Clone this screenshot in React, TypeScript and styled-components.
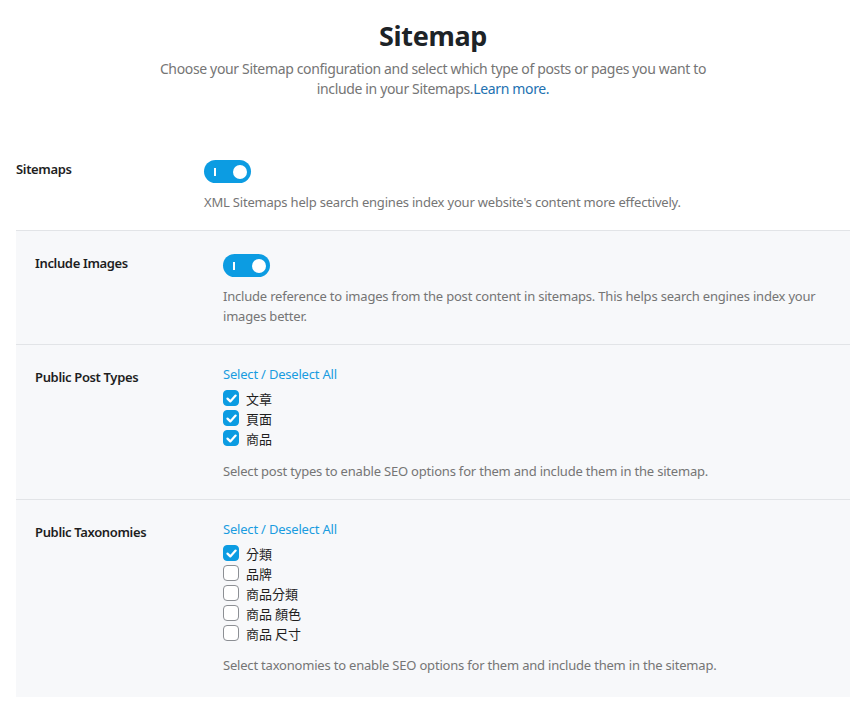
import React, { useState } from 'react';
import styled, { createGlobalStyle } from 'styled-components';

const GlobalStyle = createGlobalStyle`
  body {
    margin: 0;
    background: #fff;
    font-family: 'Noto Sans', 'Noto Sans CJK TC', sans-serif;
    letter-spacing: -0.2px;
    color: #1e1e1e;
  }
`;

const Page = styled.div`
  padding: 0 13px 0 16px;
`;

const Header = styled.header`
  text-align: center;
  padding-top: 17px;
  margin-bottom: 38px;

  > h1 {
    margin: 0;
    font-size: 27px;
    line-height: 38px;
    font-weight: 700;
    letter-spacing: -0.3px;
    color: #1d2327;
  }

  > p {
    margin: 4px auto 0;
    max-width: 570px;
    font-size: 14px;
    line-height: 20px;
    letter-spacing: -0.35px;
    color: #757575;

    a {
      color: #2271b1;
      text-decoration: none;
    }
  }
`;

const Panel = styled.div`
  background: #f7f8fa;
  border-top: 1px solid #e2e4e7;
  padding-bottom: 4px;
`;

const Row = styled.div<{ $inset?: boolean }>`
  display: grid;
  grid-template-columns: 188px 1fr;
  padding: 19px ${(p) => (p.$inset ? '19px' : '0')} 18px;

  & + & {
    border-top: 1px solid #e2e4e7;
  }
`;

const Label = styled.div`
  margin-top: 3px;
  font-size: 13px;
  line-height: 20px;
  font-weight: 600;
  letter-spacing: -0.35px;
  color: #1e1e1e;
`;

const Content = styled.div`
  display: flex;
  flex-direction: column;
  align-items: flex-start;
`;

const Description = styled.p<{ $gap?: number }>`
  margin: ${(p) => p.$gap ?? 9}px 0 0;
  font-size: 13px;
  line-height: 20px;
  color: #757575;
`;

const Track = styled.button<{ $on: boolean }>`
  position: relative;
  margin-top: 4px;
  width: 47px;
  height: 23px;
  border: none;
  padding: 0;
  border-radius: 12px;
  background: ${(p) => (p.$on ? '#0c9ce2' : '#c3c4c7')};
  cursor: pointer;

  &::before {
    content: '';
    position: absolute;
    left: 10px;
    top: 8px;
    width: 2px;
    height: 8px;
    background: #fff;
    opacity: ${(p) => (p.$on ? 1 : 0)};
  }
`;

const Knob = styled.span<{ $on: boolean }>`
  position: absolute;
  top: 4.5px;
  left: ${(p) => (p.$on ? '29px' : '4px')};
  width: 14px;
  height: 14px;
  border-radius: 50%;
  background: #fff;
`;

const SelectAll = styled.a`
  font-size: 13px;
  line-height: 20px;
  color: #1a9ce0;
  text-decoration: none;
  cursor: pointer;
  margin-bottom: 4px;
`;

const CheckRow = styled.label`
  display: flex;
  align-items: center;
  gap: 7px;
  height: 20px;
  font-size: 13px;
  font-family: 'Noto Sans CJK TC', sans-serif;
  letter-spacing: 0;
  color: #1e1e1e;
  cursor: pointer;
`;

const Box = styled.span<{ $checked: boolean }>`
  box-sizing: border-box;
  width: 16px;
  height: 16px;
  border-radius: 4px;
  border: 1px solid ${(p) => (p.$checked ? '#0c9ce2' : '#8c8f94')};
  background: ${(p) => (p.$checked ? '#0c9ce2' : '#fff')};
  display: flex;
  align-items: center;
  justify-content: center;
`;

const Toggle = ({ initial }: { initial: boolean }) => {
  const [on, setOn] = useState(initial);
  return (
    <Track $on={on} onClick={() => setOn(!on)}>
      <Knob $on={on} />
    </Track>
  );
};

interface CheckListProps {
  items: { name: string; checked: boolean }[];
}

const CheckList = ({ items }: CheckListProps) => {
  const [state, setState] = useState(items.map((i) => i.checked));
  const allOn = state.every(Boolean);
  return (
    <>
      <SelectAll onClick={() => setState(state.map(() => !allOn))}>Select / Deselect All</SelectAll>
      {items.map((item, i) => (
        <CheckRow key={item.name} onClick={() => setState(state.map((v, j) => (j === i ? !v : v)))}>
          <Box $checked={state[i]}>
            {state[i] && (
              <svg width="11" height="9" viewBox="0 0 11 9">
                <path d="M1.5 4.6l2.8 2.8L9.6 1.6" fill="none" stroke="#fff" strokeWidth="2.2" strokeLinecap="round" strokeLinejoin="round" />
              </svg>
            )}
          </Box>
          {item.name}
        </CheckRow>
      ))}
    </>
  );
};

const postTypes = [
  { name: '文章', checked: true },
  { name: '頁面', checked: true },
  { name: '商品', checked: true },
];

const taxonomies = [
  { name: '分類', checked: true },
  { name: '品牌', checked: false },
  { name: '商品分類', checked: false },
  { name: '商品 顏色', checked: false },
  { name: '商品 尺寸', checked: false },
];

const App = () => (
  <Page>
    <GlobalStyle />
    <Header>
      <h1>Sitemap</h1>
      <p>
        Choose your Sitemap configuration and select which type of posts or pages you want to include in your
        Sitemaps.<a href="#">Learn more.</a>
      </p>
    </Header>

    <Row>
      <Label>Sitemaps</Label>
      <Content>
        <Toggle initial />
        <Description>XML Sitemaps help search engines index your website's content more effectively.</Description>
      </Content>
    </Row>

    <Panel>
      <Row $inset>
        <Label>Include Images</Label>
        <Content>
          <Toggle initial />
          <Description>
            Include reference to images from the post content in sitemaps. This helps search engines index your images
            better.
          </Description>
        </Content>
      </Row>
      <Row $inset>
        <Label>Public Post Types</Label>
        <Content>
          <CheckList items={postTypes} />
          <Description $gap={13}>Select post types to enable SEO options for them and include them in the sitemap.</Description>
        </Content>
      </Row>
      <Row $inset>
        <Label>Public Taxonomies</Label>
        <Content>
          <CheckList items={taxonomies} />
          <Description $gap={12}>Select taxonomies to enable SEO options for them and include them in the sitemap.</Description>
        </Content>
      </Row>
    </Panel>
  </Page>
);

export default App;
